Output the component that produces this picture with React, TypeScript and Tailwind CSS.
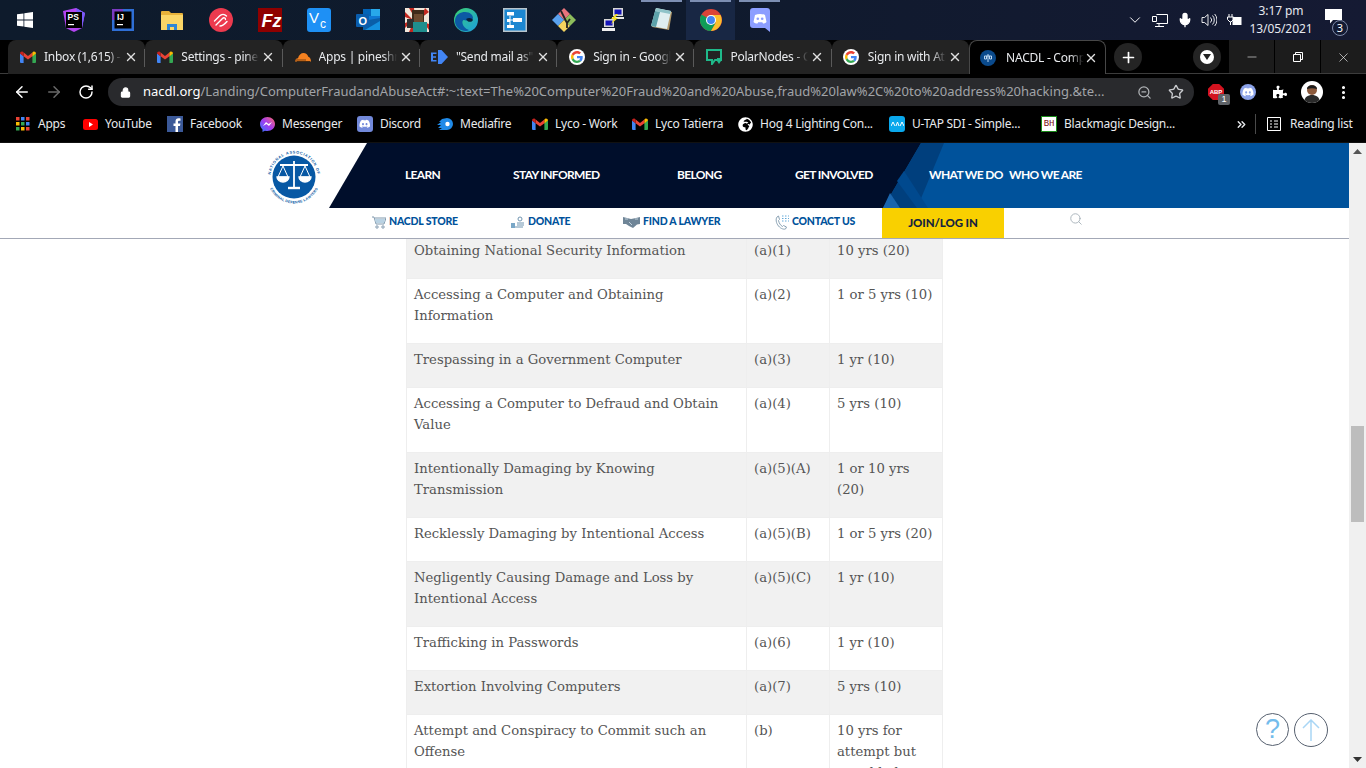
import React from 'react';
import { ArrowLeft, ArrowRight, RotateCw, Lock, ZoomOut, Star, EllipsisVertical, ChevronDown, Mic, Plus, X, Minus, ChevronsRight, Search } from 'lucide-react';
import { FaDiscord, FaPuzzlePiece, FaGlobeAfrica } from 'react-icons/fa';

const uiFont = "font-['Noto_Sans','Open_Sans',sans-serif]";

// ---- shared little icons ----
const Gmail = () => (
  <svg width="16" height="12" viewBox="0 0 16 12">
    <path d="M0 2.5V11a1 1 0 001 1h2.6V5z" fill="#4285F4" />
    <path d="M16 2.5V11a1 1 0 01-1 1h-2.6V5z" fill="#34A853" />
    <path d="M3.6 5.2 8 8.6l4.4-3.4V1.6L8 5 3.6 1.6z" fill="#EA4335" />
    <path d="M0 2.5C0 .8 1.900 0 3 .9l.6.7v3.800z" fill="#C5221F" />
    <path d="M16 2.500C16 .8 14.100 0 13 .9l-.6.7v3.800z" fill="#FBBC04" />
  </svg>
);

const GoogleG = () => (
  <span className="w-4 h-4 rounded-full bg-white flex items-center justify-center">
    <svg width="12" height="12" viewBox="0 0 48 48">
      <path fill="#EA4335" d="M24 9.500c3.500 0 6.700 1.200 9.200 3.600l6.900-6.900C35.900 2.400 30.500 0 24 0 14.600 0 6.500 5.400 2.600 13.200l8 6.200C12.400 13.700 17.700 9.500 24 9.500z" />
      <path fill="#4285F4" d="M46.900 24.500c0-1.600-.1-3.100-.4-4.500H24v9h12.900c-.6 3-2.200 5.500-4.700 7.200l7.700 6c4.500-4.200 7-10.300 7-17.700z" />
      <path fill="#FBBC05" d="M10.600 28.600c-.5-1.400-.8-3-.8-4.600s.3-3.200.8-4.600l-8-6.200C.9 16.500 0 20.100 0 24s.9 7.500 2.600 10.800l8-6.200z" />
      <path fill="#34A853" d="M24 48c6.500 0 11.900-2.100 15.900-5.800l-7.700-6c-2.200 1.400-4.900 2.300-8.200 2.300-6.300 0-11.600-4.200-13.400-10l-8 6.200C6.500 42.600 14.600 48 24 48z" />
    </svg>
  </span>
);

const DiscordBubble = ({ size = 16 }: { size?: number }) => (
  <span className="bg-[#7289da] rounded-[3px] flex items-center justify-center" style={{ width: size, height: size }}>
    <FaDiscord color="#fff" size={size * 0.72} />
  </span>
);

const Cloudflare = () => (
  <svg width="17" height="10" viewBox="0 0 17 10">
    <path d="M1 9.500c0-2 1.300-3.200 3-3.200C4.800 3 7 1 9.500 1c2.300 0 4.200 1.500 4.800 3.800 1.500.2 2.700 2.300 2.700 4.700z" fill="#f48120" />
    <path d="M1 8h11M3 9.500h13" stroke="#000" strokeWidth=".5" />
  </svg>
);

const SendArrow = () => (
  <svg width="17" height="16" viewBox="0 0 17 16">
    <path d="M0 3.500h5.500v1.500H2v2.200h3v1.500H2V11h3.500v1.500H0z" fill="#4285F4" />
    <path d="M7 1h3.500L17 8l-6.500 7H7z" fill="#4285F4" />
  </svg>
);

const PolarNodes = () => (
  <svg width="16" height="16" viewBox="0 0 16 16" fill="none">
    <path d="M1 1h14v10H9l-3 4v-4H1z" stroke="#1fb98a" strokeWidth="2" />
    <path d="M11 9h4v3l-2 3-2-3z" fill="#1fb98a" />
  </svg>
);

const NacdlFav = () => (
  <span className="w-4 h-4 rounded-full bg-[#0a4a8c] flex items-center justify-center">
    <svg width="10" height="10" viewBox="0 0 10 10" stroke="#bcd8f2" strokeWidth="1" fill="none">
      <path d="M5 1v8M1.500 3h7M1.500 3v3h2V3M6.500 3v3h2V3" />
    </svg>
  </span>
);

// ---- taskbar apps ----
const taskbarApps: React.ReactNode[] = [
  <svg key="ps" width="24" height="24" viewBox="0 0 24 24">
    <path d="M1 3 14 0l9 5-3 15-8 4-8-4z" fill="#b345f1" />
    <path d="M14 0l9 5-3 15-4-2z" fill="#765af8" />
    <rect x="4" y="4" width="16" height="16" fill="#000" />
    <text x="5.500" y="12" fontSize="8.500" fontWeight="700" fill="#fff" fontFamily="Liberation Sans">PS</text>
    <rect x="6" y="16" width="6" height="1.200" fill="#fff" />
  </svg>,
  <svg key="ij" width="22" height="22" viewBox="0 0 22 22">
    <rect width="22" height="22" fill="#2f6fd6" />
    <rect x="0" y="0" width="11" height="11" fill="#7b3ac2" />
    <rect x="2.500" y="2.500" width="17" height="17" fill="#000" />
    <text x="5" y="11" fontSize="8.500" fontWeight="700" fill="#fff" fontFamily="Liberation Sans">IJ</text>
    <rect x="5" y="15" width="6" height="1.200" fill="#fff" />
  </svg>,
  <svg key="folder" width="22" height="20" viewBox="0 0 22 20">
    <path d="M0 2a1 1 0 011-1h7l2 2h11a1 1 0 011 1v15H0z" fill="#e8b23a" />
    <rect y="5" width="22" height="15" fill="#fbd667" />
    <path d="M6 20v-6h10v6h-3v-3H9v3z" fill="#2f86d6" />
  </svg>,
  <svg key="authy" width="24" height="24" viewBox="0 0 24 24" fill="none">
    <circle cx="12" cy="12" r="12" fill="#ec3a4e" />
    <path d="M5.500 13l5-5c2-2 5-2 7 0M8.500 15.500l5-5c1.500-1.500 3-.5 3 1M11 18c2 0 4-1 7-4.500M7 17l5.500-5.500" stroke="#fff" strokeWidth="1.400" strokeLinecap="round" />
  </svg>,
  <svg key="fz" width="24" height="24" viewBox="0 0 24 24">
    <rect width="24" height="24" fill="#8f0000" />
    <text x="3.500" y="19" fontSize="18" fontStyle="italic" fontWeight="700" fill="#fff" fontFamily="Liberation Sans">Fz</text>
  </svg>,
  <svg key="vnc" width="24" height="24" viewBox="0 0 24 24">
    <rect width="24" height="24" rx="3" fill="#1e90f5" />
    <text x="2" y="15" fontSize="15" fill="#fff" fontFamily="Liberation Sans">V</text>
    <text x="13" y="20" fontSize="12" fill="#fff" fontFamily="Liberation Sans">c</text>
  </svg>,
  <svg key="outlook" width="24" height="24" viewBox="0 0 24 24">
    <rect x="7" y="1" width="17" height="21" fill="#0f78d4" />
    <rect x="7" y="1" width="8" height="7" fill="#0364b8" />
    <rect x="15" y="1" width="9" height="7" fill="#28a8ea" />
    <path d="M7 13l17-3v12H7z" fill="#0a5ea8" />
    <path d="M9 22l15-9v9z" fill="#1490df" />
    <rect x="0" y="6" width="13" height="13" rx="1" fill="#0a5dad" />
    <text x="2.500" y="16.500" fontSize="11" fontWeight="700" fill="#fff" fontFamily="Liberation Sans">O</text>
  </svg>,
  <svg key="steve" width="24" height="24" viewBox="0 0 24 24">
    <rect width="24" height="24" fill="#f2e6da" />
    <path d="M0 4l8 8L0 9zM0 15l8-3-8 8zM4 24l5-11 1 11zM4 0l6 10L9 0zM20 0l-4 10 8-6zM24 22l-6-8 6 2z" fill="#c2271f" />
    <rect x="7" y="2" width="12" height="12" fill="#3f2a1a" />
    <rect x="9" y="6" width="9" height="8" fill="#6d4a30" />
    <rect x="2" y="11" width="7" height="9" fill="#2e2e2e" />
    <rect x="8" y="14" width="14" height="10" fill="#1f8e8e" />
  </svg>,
  <svg key="edge" width="24" height="24" viewBox="0 0 24 24" fill="none">
    <defs>
      <linearGradient id="edgeA" x1="0" y1="0" x2="1" y2="1"><stop offset="0" stopColor="#3bd16f" /><stop offset="1" stopColor="#1b9de2" /></linearGradient>
    </defs>
    <circle cx="12" cy="12" r="12" fill="url(#edgeA)" />
    <path d="M1 13C1 6 7 4 11 4c5 0 8 3 8 6 0 2-2 3-4 3-2.500 0-4-1-5-1-3 0-2 8 5 10-1 .6-2 1-3 1C6 23 1 19 1 13z" fill="#0c59a4" />
    <path d="M12 11c3-2 6-1 7 1-1 2-3 2-5 1.500z" fill="#0a2038" />
  </svg>,
  <svg key="diagram" width="24" height="24" viewBox="0 0 24 24">
    <rect width="24" height="24" fill="#b8c4cc" />
    <rect x="1.500" y="1.500" width="21" height="21" fill="#1c87d1" />
    <rect x="4" y="4" width="7" height="3.500" fill="#fff" />
    <rect x="4" y="11" width="3" height="3" fill="#fff" />
    <rect x="10" y="10" width="9" height="4" fill="#fff" />
    <rect x="4" y="17" width="7" height="3" fill="#fff" />
    <path d="M7 8v9M7 12h4" stroke="#fff" />
  </svg>,
  <svg key="git" width="24" height="24" viewBox="0 0 24 24">
    <path d="M12 0l6 6-6 6-6-6z" fill="#e8747c" />
    <path d="M0 12l6-6 6 6-6 6z" fill="#5aa2ef" />
    <path d="M24 12l-6-6-6 6 6 6z" fill="#8dbd5c" />
    <path d="M12 24l6-6-6-6-6 6z" fill="#f4d35e" />
    <path d="M9 3l6 12v5M15 15l3-4" stroke="#222" strokeWidth="1.800" fill="none" />
  </svg>,
  <svg key="putty" width="22" height="24" viewBox="0 0 22 24">
    <rect x="11" y="0" width="10" height="8" fill="#d8d8d8" />
    <rect x="12.500" y="1.500" width="7" height="5" fill="#1414b8" />
    <rect x="10" y="9" width="12" height="2" fill="#e8e8e8" />
    <rect x="2" y="11" width="10" height="8" fill="#d8d8d8" />
    <rect x="3.500" y="12.500" width="7" height="5" fill="#1414b8" />
    <rect x="0" y="20" width="13" height="3" fill="#f0f0f0" />
    <path d="M14 6l-5 5h3l-3 5 7-6h-3l3-4z" fill="#f5dd1f" />
  </svg>,
  <svg key="notepad" width="24" height="24" viewBox="0 0 24 24">
    <path d="M6 1l16 3-3 18L2 19z" fill="#b39a6c" />
    <path d="M6 0l15 3-4 18L1 18z" fill="#dfeef0" />
    <path d="M6 0l15 3-1 3L5 3z" fill="#8fc3c8" />
    <path d="M1 18L5 3l5 1-4 15z" fill="#5da2aa" />
  </svg>,
  <svg key="chrome" width="22" height="22" viewBox="0 0 24 24">
    <circle cx="12" cy="12" r="12" fill="#db4437" />
    <path d="M12 12L1.600 6A12 12 0 0012 24l5.200-9z" fill="#0f9d58" />
    <path d="M12 6.500h10.400A12 12 0 0112 24l5.200-9z" fill="#fbc02d" />
    <circle cx="12" cy="12" r="5.500" fill="#fff" />
    <circle cx="12" cy="12" r="4.300" fill="#4285f4" />
  </svg>,
  <svg key="discord" width="20" height="24" viewBox="0 0 20 24">
    <path d="M3 0h14a3 3 0 013 3v21l-5-4H3a3 3 0 01-3-3V3a3 3 0 013-3z" fill="#8c9eff" />
    <path d="M5 7c3-1.500 7-1.500 10 0l1.500 7c-1 1-2.500 1.500-3.500 1.500l-.7-1.200H8.200L7.500 15.500C6 15.500 4.500 15 3.500 14z" fill="#fff" />
    <circle cx="7.800" cy="10.800" r="1.300" fill="#8c9eff" />
    <circle cx="12.200" cy="10.800" r="1.300" fill="#8c9eff" />
  </svg>,
];

function Taskbar() {
  return (
    <div className="h-10 flex items-stretch bg-gradient-to-r from-[#0e1b2c] via-[#0f1a2d] to-[#151a33] text-white">
      <div className="w-[49px] flex items-center justify-center">
        <svg width="16" height="16" viewBox="0 0 16 16" fill="#fff">
          <path d="M0 2.300 6.500 1.400v6.200H0zM7.300 1.300 16 0v7.600H7.300zM0 8.400h6.500v6.200L0 13.700zM7.300 8.400H16V16l-8.700-1.200z" />
        </svg>
      </div>
      {taskbarApps.map((icon, i) => (
        <div key={i} className={`w-[49px] flex items-center justify-center relative ${i === 13 ? 'bg-[#182744]' : ''}`}>
          {i >= 12 && <span className="absolute top-0 inset-x-1 h-0.5 bg-[#7d8fb3]" />}
          {icon}
        </div>
      ))}
      <div className="flex-1" />
      <div className="flex items-center">
        <ChevronDown size={18} strokeWidth={1.3} className="mr-[8px]" />
        <svg width="16" height="15" viewBox="0 0 16 15" fill="none" stroke="#fff" className="mr-[9px]">
          <path d="M4.500 1.500h11v9h-11M7 10.500v3M3 13.500h9M.5 3.500h4v5h-4z" />
        </svg>
        <Mic size={16} strokeWidth={2} fill="#fff" className="mr-[8px]" />
        <svg width="16" height="14" viewBox="0 0 16 14" fill="none" stroke="#fff" className="mr-[9px]">
          <path d="M1 4.500h2.500L7 1.500v11l-3.500-3H1zM9.500 4.500a3.500 3.500 0 010 5M11.500 2.500a6.500 6.500 0 010 9M13.700 1a9 9 0 010 12" strokeWidth=".9" />
        </svg>
        <svg width="16" height="13" viewBox="0 0 16 13" fill="none" stroke="#fff" className="mr-[6px]">
          <path d="M3 0v3M6 0v3M1.500 3h6v2.500L5 8H4L1.500 5.500zM4.500 8v3" />
          <rect x="7" y="3.500" width="8" height="7" fill="#fff" />
        </svg>
        <div className="w-[66px] text-center text-[12px] leading-[18px] tracking-[-0.1px] font-['Noto_Sans',sans-serif] text-[#e6e8ee]">
          <div>3:17 pm</div>
          <div>13/05/2021</div>
        </div>
        <div className="w-[52px] h-10 relative flex items-center pl-[11px]">
          <svg width="17" height="15" viewBox="0 0 17 15" fill="#fff" className="-mt-[7px]">
            <path d="M0 0h17v11H8l-3 3.500V11H0z" />
          </svg>
          <span className="absolute left-[18px] top-[20px] w-4 h-4 rounded-full bg-[#121a33] border border-[#7f8aa8] text-[11px] leading-[14px] text-center">3</span>
        </div>
      </div>
    </div>
  );
}

// ---- chrome tabs ----
const tabs = [
  { icon: <Gmail />, title: 'Inbox (1,615) - pinesh' },
  { icon: <Gmail />, title: 'Settings - pinesh@' },
  { icon: <Cloudflare />, title: 'Apps | pineshmenat' },
  { icon: <SendArrow />, title: '"Send mail as" sett' },
  { icon: <GoogleG />, title: 'Sign in - Google Acc' },
  { icon: <PolarNodes />, title: 'PolarNodes - Cloud' },
  { icon: <GoogleG />, title: 'Sign in with Atlassian' },
  { icon: <NacdlFav />, title: 'NACDL - Computer', active: true },
];

function TabStrip() {
  return (
    <div className="h-[34px] flex bg-black relative">
      <span className="absolute left-0 right-0 bottom-0 h-px bg-[#3c3c3c]" />
      <div className="w-2" />
      {tabs.map((t, i) => (
        <div
          key={i}
          className={`w-[137.3px] h-[34px] flex items-center relative rounded-t-lg ${
            t.active ? 'bg-black border border-b-0 border-[#474747] z-10' : 'bg-[#232323] mb-px'
          }`}
        >
          <span className={`w-[36px] flex justify-center shrink-0 ${t.active ? '' : 'pl-[3px]'}`}>{t.icon}</span>
          <span className={`${uiFont} w-[78px] overflow-hidden whitespace-nowrap text-[12px] tracking-[-0.25px] text-[#e8eaed] [mask-image:linear-gradient(90deg,#000_82%,transparent)]`}>
            {t.title}
          </span>
          <X size={14} strokeWidth={2.4} className={`text-[#e0e0e0] ${t.active ? '' : 'ml-[2px]'}`} />
          {i < 6 && !t.active && <span className="absolute right-0 top-[9px] h-[18px] w-px bg-[#5a5a5a]" />}
        </div>
      ))}
      <div className="w-[8px]" />
      <div className="w-7 h-7 mt-[3px] rounded-full bg-[#242424] flex items-center justify-center">
        <Plus size={17} strokeWidth={2.4} className="text-white" />
      </div>
      <div className="flex-1" />
      <div className="w-7 h-7 mt-[3px] mr-2 rounded-full bg-[#242424] flex items-center justify-center">
        <span className="w-[14px] h-[14px] rounded-full bg-white flex items-center justify-center">
          <svg width="8" height="6" viewBox="0 0 8 6"><path d="M0 0h8L4 6z" fill="#222" /></svg>
        </span>
      </div>
      <div className="w-[137px] h-[34px] flex gap-px bg-black">
        <div className="flex-1 bg-[#1c1c1c] flex items-center justify-center"><Minus size={14} strokeWidth={1} className="text-white" /></div>
        <div className="flex-1 bg-[#1c1c1c] flex items-center justify-center">
          <svg width="10" height="10" viewBox="0 0 10 10" fill="none" stroke="#fff"><path d="M.5 2.500h7v7h-7zM2.500 2.500v-2h7v7h-2" /></svg>
        </div>
        <div className="flex-1 bg-[#1c1c1c] flex items-center justify-center"><X size={15} strokeWidth={1} className="text-white" /></div>
      </div>
    </div>
  );
}

function Toolbar() {
  return (
    <div className="h-9 bg-black flex items-center text-white">
      <ArrowLeft size={18} strokeWidth={2} className="ml-[13px]" />
      <ArrowRight size={18} strokeWidth={2} className="ml-[14px] text-[#6a6a6a]" />
      <RotateCw size={16} strokeWidth={2.2} className="ml-[15px]" />
      <div className="ml-[14px] w-[1086px] h-7 rounded-full bg-[#292a2d] flex items-center pl-[12px] pr-[10px]">
        <Lock size={11} fill="#fff" strokeWidth={2.4} className="mr-[12px] shrink-0" />
        <div className={`${uiFont} text-[13px] w-[977px] shrink-0 overflow-hidden whitespace-nowrap text-[#a1a4a8]`}>
          <span className="text-white">nacdl.org</span>/Landing/ComputerFraudandAbuseAct#:~:text=The%20Computer%20Fraud%20and%20Abuse,fraud%20law%2C%20to%20address%20hacking.&amp;te...
        </div>
        <ZoomOut size={15} className="ml-[17px] text-[#b0b3b6] shrink-0" />
        <Star size={16} className="ml-[16px] text-[#c9cbce] shrink-0" />
      </div>
      <div className="w-[14px]" />
      <div className="w-4 h-4 relative bg-[#d3131f] [clip-path:polygon(30%_0,70%_0,100%_30%,100%_70%,70%_100%,30%_100%,0_70%,0_30%)] flex items-center justify-center">
        <span className="text-[6px] font-bold leading-none font-['Liberation_Sans',sans-serif]">ABP</span>
      </div>
      <span className="w-3 h-[11px] -ml-1.5 mt-[14px] rounded-[2px] bg-[#5f6368] text-[9px] leading-[11px] text-center font-['Liberation_Sans',sans-serif] z-10">1</span>
      <span className="ml-[10px] w-4 h-4 rounded-full bg-[#8ba2e8] flex items-center justify-center">
        <FaDiscord size={12} color="#fff" />
      </span>
      <FaPuzzlePiece size={14} className="ml-[17px]" />
      <span className="ml-[14px] w-[22px] h-[22px] rounded-full bg-white overflow-hidden flex items-end justify-center">
        <svg width="22" height="22" viewBox="0 0 22 22">
          <circle cx="11" cy="9" r="5" fill="#8c5a3c" />
          <path d="M6 8c0-5 10-5 10 0-3-1-7-1-10 0z" fill="#1c1c1c" />
          <path d="M3 22c0-6 4-8 8-8s8 2 8 8z" fill="#2a2a2a" />
        </svg>
      </span>
      <EllipsisVertical size={17} strokeWidth={2.4} className="ml-[12px]" />
    </div>
  );
}

// ---- bookmarks ----
const bookmarks = [
  {
    w: 'w-[67px]', label: 'Apps', icon: (
      <svg width="14" height="14" viewBox="0 0 14 14">
        {[0, 5, 10].map((y, r) => [0, 5, 10].map((x, c) => (
          <rect key={`${r}${c}`} x={x} y={y} width="3.500" height="3.500" fill={['#ea4335', '#4285f4', '#ea4335', '#fbbc04', '#34a853', '#4285f4', '#34a853', '#fbbc04', '#ea4335'][r * 3 + c]} />
        )))}
      </svg>
    ),
  },
  {
    w: 'w-[85px]', label: 'YouTube', icon: (
      <svg width="15" height="11" viewBox="0 0 15 11"><rect width="15" height="11" rx="2.500" fill="#f00" /><path d="M6 3l4 2.500L6 8z" fill="#fff" /></svg>
    ),
  },
  {
    w: 'w-[92px]', label: 'Facebook', icon: (
      <svg width="16" height="16" viewBox="0 0 16 16"><rect width="16" height="16" fill="#3b5998" /><path d="M11 16v-6h2l.4-2.500H11V6c0-.8.3-1.300 1.400-1.300h1.100V2.500c-.6-.1-1.300-.2-2-.2C9.700 2.300 8.500 3.400 8.500 5.500v2h-2V10h2v6z" fill="#fff" /></svg>
    ),
  },
  {
    w: 'w-[98px]', label: 'Messenger', icon: (
      <svg width="15" height="15" viewBox="0 0 15 15">
        <defs><linearGradient id="msgr" x1="0" y1="1" x2="1" y2="0"><stop offset="0" stopColor="#2a7bff" /><stop offset=".5" stopColor="#a33bf0" /><stop offset="1" stopColor="#ff6a68" /></linearGradient></defs>
        <path d="M7.500 0C3.400 0 0 3 0 7c0 2.200 1 4.100 2.500 5.400V15l2.400-1.300c.8.200 1.700.3 2.600.3 4.100 0 7.500-3 7.500-7S11.600 0 7.500 0z" fill="url(#msgr)" />
        <path d="M3 9l3-4 2.500 2L12 5 9 9 6.500 7z" fill="#fff" />
      </svg>
    ),
  },
  { w: 'w-[80px]', label: 'Discord', icon: <DiscordBubble /> },
  {
    w: 'w-[95px]', label: 'Mediafire', icon: (
      <svg width="16" height="12" viewBox="0 0 16 12"><path d="M10 0a6 6 0 110 12H2l3-2H1l3-3H0l4-3H2l3-3z" fill="#1f8ae8" /><circle cx="10.500" cy="6" r="2.200" fill="#fff" /></svg>
    ),
  },
  { w: 'w-[100px]', label: 'Lyco - Work', icon: <Gmail /> },
  { w: 'w-[105px]', label: 'Lyco Tatierra', icon: <Gmail /> },
  { w: 'w-[152px]', label: 'Hog 4 Lighting Con...', icon: <span className="w-4 h-4 rounded-full bg-black flex items-center justify-center"><FaGlobeAfrica size={15} color="#fff" /></span> },
  {
    w: 'w-[152px]', label: 'U-TAP SDI - Simple...', icon: (
      <span className="w-4 h-4 rounded-[3px] bg-[#0aa8ec] flex items-center justify-center">
        <svg width="13" height="6" viewBox="0 0 13 6" fill="none" stroke="#fff"><path d="M0 5l2-4 2 4M5 5l1.500-4L8 5M9 5l2-4 2 4" /></svg>
      </span>
    ),
  },
  {
    w: 'w-[190px]', label: 'Blackmagic Design...', icon: (
      <span className="w-4 h-4 bg-white border border-[#1a8a1a] text-[#7a1010] text-[9px] leading-[14px] text-center font-['Liberation_Mono',monospace]">BH</span>
    ),
  },
];

function BookmarksBar() {
  return (
    <div className={`${uiFont} h-8 bg-black flex items-center pl-[15px] pb-1 text-[12px] tracking-[-0.25px] text-[#e8eaed] whitespace-nowrap`}>
      {bookmarks.map((b) => (
        <div key={b.label} className={`${b.w} flex items-center shrink-0`}>
          <span className="w-4 flex justify-center shrink-0 mr-[7px]">{b.icon}</span>
          {b.label}
        </div>
      ))}
      <ChevronsRight size={13} strokeWidth={2.6} className="ml-[4px]" />
      <span className="ml-[7px] w-px h-5 bg-[#4a4a4a]" />
      <svg width="14" height="14" viewBox="0 0 14 14" fill="none" stroke="#fff" className="ml-[11px] mr-[9px]">
        <path d="M.5.500h13v13H.500zM3 4h2M3 7h2M3 10h2M7 4h4M7 7h4M7 10h4" />
      </svg>
      Reading list
    </div>
  );
}

// ---- the web page ----
function NacdlLogo() {
  return (
    <svg width="56" height="56" viewBox="0 0 56 56">
      <defs>
        <path id="ringTop" d="M5.900 36A23.500 23.500 0 1150.100 36" />
        <path id="ringBottom" d="M3.100 37A26.500 26.500 0 0052.900 37" />
      </defs>
      <circle cx="28" cy="28" r="21.500" fill="#0758a4" />
      <text fontSize="3.800" fontWeight="700" fill="#0758a4" fontFamily="Liberation Sans" letterSpacing=".7" textAnchor="middle">
        <textPath href="#ringTop" startOffset="50%">NATIONAL ASSOCIATION OF</textPath>
      </text>
      <text fontSize="3.600" fontWeight="700" fill="#0758a4" fontFamily="Liberation Sans" letterSpacing=".2" textAnchor="middle">
        <textPath href="#ringBottom" startOffset="50%">CRIMINAL DEFENSE LAWYERS</textPath>
      </text>
      <g stroke="#fff" fill="none" strokeWidth="1.300">
        <path d="M28 12v26M14 16h28" strokeWidth="1.800" />
        <path d="M17 17l-5 11h10zM39 17l-5 11h10z" strokeWidth="1" />
        <path d="M11 28a6 5 0 0012 0zM33 28a6 5 0 0012 0z" fill="#fff" />
        <path d="M22 39h12" strokeWidth="2.400" />
      </g>
    </svg>
  );
}

const navLeft = [
  { label: 'LEARN', w: 'w-[108px]' },
  { label: 'STAY INFORMED', w: 'w-[164px]' },
  { label: 'BELONG', w: 'w-[118px]' },
  { label: 'GET INVOLVED', w: 'w-[134px]' },
  { label: 'WHAT WE DO', w: 'w-[80px]' },
  { label: 'WHO WE ARE', w: 'w-[80px]' },
];

function Cart() {
  return (
    <svg width="14" height="13" viewBox="0 0 14 13" fill="none" stroke="#7f98ad">
      <path d="M0 1h2l2 7h8l2-6H3" />
      <path d="M3 3l1 4h8l1-4z" fill="#b9d2e3" stroke="none" />
      <circle cx="5" cy="11" r="1.200" />
      <circle cx="11" cy="11" r="1.200" />
    </svg>
  );
}
function Donate() {
  return (
    <svg width="14" height="13" viewBox="0 0 14 13" fill="none" stroke="#6f94b0">
      <circle cx="9" cy="3" r="2" />
      <path d="M6 7h7M6 9h7" />
      <rect x="0" y="7" width="4" height="5" fill="#7aa7c7" stroke="none" />
      <path d="M4 11h8" />
    </svg>
  );
}
function Hands() {
  return (
    <svg width="17" height="12" viewBox="0 0 17 12" fill="#6f8597">
      <path d="M0 1l4 1 4 1 5-1 4-1v7l-3 .5L10 12 6 10 3 8 0 8z" />
      <path d="M2 3h3M12 3h3M6 6l3 3" stroke="#d5e3ee" strokeWidth=".8" />
    </svg>
  );
}
function Phone() {
  return (
    <svg width="14" height="15" viewBox="0 0 14 15" fill="none">
      <path d="M2 2C.5 4 1 8 3.500 11s5.500 3.500 7 3l1-2-3-1.500-1 1c-2-1-3.500-3.500-4-6l1-1L3.500 1z" stroke="#8aa2b4" />
      <path d="M7 1h1.500M10 1h1.500M13 1h1M7 3.500h1.500M10 3.500h1.500M13 3.500h1M7 6h1.500M10 6h1.500M13 6h1" stroke="#63a9d8" />
    </svg>
  );
}

const subNav = [
  { label: 'NACDL STORE', icon: <Cart />, w: 'w-[139px]' },
  { label: 'DONATE', icon: <Donate />, w: 'w-[112px]' },
  { label: 'FIND A LAWYER', icon: <Hands />, w: 'w-[152px]' },
  { label: 'CONTACT US', icon: <Phone />, w: 'w-[107px]' },
];

function SiteHeader() {
  return (
    <div className="font-['Lato',sans-serif] font-bold shrink-0 relative z-10 bg-white">
      <div className="h-[65px] relative flex items-center">
        {/* slanted header artwork */}
        <svg className="absolute inset-0" width="1349" height="65" viewBox="0 0 1349 65" aria-hidden="true">
          <path d="M920 0h429v65H882z" fill="#00529b" />
          <path d="M367 0h554l-38 65H329z" fill="#000e2b" />
          <path d="M921 0h23l-27 65h-34z" fill="#003f7d" />
          <path d="M904 28l24 37h-11l-20-27z" fill="#00498e" />
          <path d="M890 50l10 15h-17z" fill="#1a65ad" />
        </svg>
        <div className="relative w-[405px] shrink-0 flex justify-end pr-[83px] pt-[3px]">
          <NacdlLogo />
        </div>
        <nav className="relative flex text-white text-[12px] tracking-[-0.65px] pb-[2px]">
          {navLeft.map((n) => (
            <span key={n.label} className={`${n.w} whitespace-nowrap`}>{n.label}</span>
          ))}
        </nav>
      </div>
      <div className="h-[31px] border-b border-[#a3a8b6] flex pl-[372px]">
        {subNav.map((s) => (
          <div key={s.label} className={`${s.w} flex items-center pb-[2px] text-[#00529b] text-[10.5px] font-black tracking-[-0.2px] whitespace-nowrap`}>
            <span className="mr-[3px] flex justify-center">{s.icon}</span>
            {s.label}
          </div>
        ))}
        <div className="w-[122px] h-[30px] bg-[#f9d000] flex items-center justify-center pb-[1px] text-[#15233f] text-[11.5px] font-black tracking-[-0.1px]">JOIN/LOG IN</div>
        <Search size={14} strokeWidth={1.6} className="ml-[65px] mt-[4px] text-[#a8b3ba]" />
      </div>
    </div>
  );
}

const rows = [
  ['Obtaining National Security Information', '(a)(1)', '10 yrs (20)'],
  ['Accessing a Computer and Obtaining\nInformation', '(a)(2)', '1 or 5 yrs (10)'],
  ['Trespassing in a Government Computer', '(a)(3)', '1 yr (10)'],
  ['Accessing a Computer to Defraud and Obtain\nValue', '(a)(4)', '5 yrs (10)'],
  ['Intentionally Damaging by Knowing\nTransmission', '(a)(5)(A)', '1 or 10 yrs\n(20)'],
  ['Recklessly Damaging by Intentional Access', '(a)(5)(B)', '1 or 5 yrs (20)'],
  ['Negligently Causing Damage and Loss by\nIntentional Access', '(a)(5)(C)', '1 yr (10)'],
  ['Trafficking in Passwords', '(a)(6)', '1 yr (10)'],
  ['Extortion Involving Computers', '(a)(7)', '5 yrs (10)'],
  ['Attempt and Conspiracy to Commit such an\nOffense', '(b)', '10 yrs for\nattempt but\nno added'],
];

function OffenseTable() {
  return (
    <div className="flex-1 overflow-hidden pl-[406px]">
      <table className="-mt-[5px] w-[536px] table-fixed border-collapse font-['DejaVu_Serif',serif] text-[13.2px] leading-[21px] text-[#555]">
        <colgroup>
          <col className="w-[340px]" />
          <col className="w-[83px]" />
          <col className="w-[113px]" />
        </colgroup>
        <tbody>
          {rows.map((r, i) => (
            <tr key={i} className={i % 2 === 0 ? 'bg-[#f1f1f1]' : 'bg-white'}>
              {r.map((c, j) => (
                <td key={j} className="align-top border border-[#eeeeee] pl-[7px] pt-[5px] pb-[17px] whitespace-pre">{c}</td>
              ))}
            </tr>
          ))}
        </tbody>
      </table>
    </div>
  );
}

function Scrollbar() {
  return (
    <div className="w-[17px] bg-[#f0f0f0] flex flex-col items-center relative shrink-0">
      <svg width="9" height="5" viewBox="0 0 9 5" className="mt-[6px]"><path d="M4.500 0 9 5H0z" fill="#555" /></svg>
      <div className="w-[13px] h-24 bg-[#bdbdbd] mt-[272px]" />
      <div className="flex-1" />
      <svg width="9" height="5" viewBox="0 0 9 5" className="mb-[6px]"><path d="M0 0h9L4.500 5z" fill="#333" /></svg>
    </div>
  );
}

export default function App() {
  return (
    <div className="w-[1366px] h-[768px] overflow-hidden flex flex-col bg-white">
      <Taskbar />
      <TabStrip />
      <Toolbar />
      <BookmarksBar />
      <div className="h-px bg-[#111]" />
      <div className="flex-1 flex min-h-0 relative">
        <div className="flex-1 flex flex-col min-w-0">
          <SiteHeader />
          <OffenseTable />
        </div>
        <Scrollbar />
        {/* floating help and back-to-top buttons */}
        <div className="absolute left-[1256px] top-[570px] flex gap-[5px]">
          <div className="w-[33px] h-[33px] rounded-full border border-[#56606f] bg-white flex items-center justify-center text-[#74bcec] text-[27px] leading-none font-['Liberation_Sans',sans-serif]">?</div>
          <div className="w-[34px] h-[34px] rounded-full border border-[#56606f] bg-white flex items-center justify-center">
            <svg width="18" height="22" viewBox="0 0 18 22" fill="none" stroke="#a9d6f5" strokeWidth="1.500"><path d="M9 22V1M1 9l8-8 8 8" /></svg>
          </div>
        </div>
      </div>
    </div>
  );
}
